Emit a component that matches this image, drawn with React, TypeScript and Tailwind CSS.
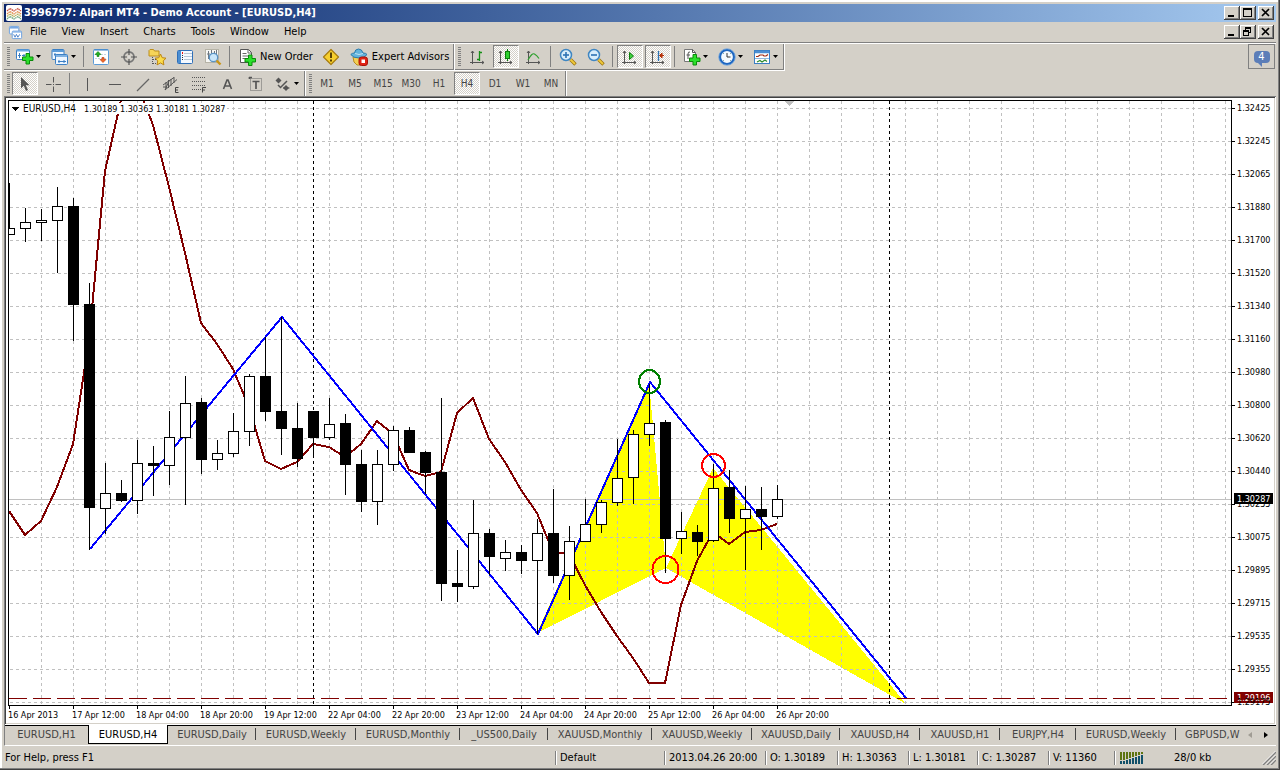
import type { ReactNode } from 'react';

const PRICES = [
  '1.32425', '1.32245', '1.32065', '1.31880', '1.31700', '1.31520', '1.31340', '1.31160', '1.30980', '1.30800',
  '1.30620', '1.30440', '1.30255', '1.30075', '1.29895', '1.29715', '1.29535', '1.29355', '1.29175',
];
const DATES = [
  '16 Apr 2013', '17 Apr 12:00', '18 Apr 04:00', '18 Apr 20:00', '19 Apr 12:00', '22 Apr 04:00', '22 Apr 20:00',
  '23 Apr 12:00', '24 Apr 04:00', '24 Apr 20:00', '25 Apr 12:00', '26 Apr 04:00', '26 Apr 20:00',
];

// One bar every 16 units: [high, low, body top, body bottom, falling]
const BARS: [number, number, number, number, number][] = [
  [183, 234, 228, 234, 0], [208, 241, 222, 228, 0], [209, 240, 220, 222, 0], [187, 272, 206, 220, 0],
  [198, 340, 206, 304, 1], [283, 549, 304, 507, 1], [463, 533, 493, 508, 0], [480, 501, 493, 500, 1],
  [440, 513, 463, 500, 0], [446, 495, 463, 465, 1], [411, 484, 437, 465, 0], [376, 504, 403, 437, 0],
  [398, 473, 402, 459, 1], [440, 469, 453, 459, 0], [413, 456, 431, 453, 0], [374, 445, 376, 431, 0],
  [337, 420, 376, 411, 1], [317, 454, 411, 428, 1], [403, 466, 428, 458, 1], [411, 456, 411, 437, 1],
  [398, 439, 424, 437, 0], [414, 494, 423, 464, 1], [450, 511, 464, 501, 1], [450, 524, 464, 501, 0],
  [426, 470, 430, 464, 0], [427, 452, 430, 452, 1], [451, 493, 452, 472, 1], [398, 600, 472, 583, 1],
  [550, 601, 583, 586, 1], [500, 588, 533, 586, 0], [529, 574, 533, 556, 1], [540, 570, 552, 558, 0],
  [545, 573, 552, 560, 1], [519, 633, 533, 560, 0], [489, 582, 533, 575, 1], [526, 599, 541, 575, 0],
  [499, 541, 524, 541, 0], [500, 532, 502, 524, 0], [439, 505, 478, 502, 0], [430, 503, 434, 477, 0],
  [384, 445, 423, 434, 0], [420, 572, 422, 538, 1], [512, 553, 531, 538, 0], [525, 555, 532, 541, 1],
  [464, 541, 488, 540, 0], [470, 532, 487, 518, 1], [486, 569, 509, 518, 0], [487, 549, 509, 516, 1],
  [485, 518, 499, 516, 0],
];
const INDICATOR = [
  511, 535, 521, 487, 444, 340, 171, 100, 84, 125, 187, 253, 323, 344, 369, 407, 461, 469, 462, 444, 447, 457, 444,
  421, 434, 470, 476, 472, 413, 398, 439, 462, 490, 513, 552, 554, 585, 612, 636, 658, 683, 683, 605, 561, 532, 544,
  532, 530, 524,
];
const barX = (i: number) => 9 + i * 16;

function Chart() {
  return (
    <svg viewBox="6 98 1268 625" className="block h-full w-full" shapeRendering="crispEdges" role="img" aria-label="EURUSD,H4">
      <defs>
        <clipPath id="plot">
          <rect x="9" y="101" width="1222" height="604" />
        </clipPath>
      </defs>
      <rect x="6" y="98" width="1268" height="625" fill="#fff" />
      <g clipPath="url(#plot)">
        <g fill="#ff0">
          <path d="M537 633L649 382L666 568Z" />
          <path d="M666 568L713 468L906 704Z" />
        </g>
        <g stroke="#c0c0c0" strokeDasharray="3 3">
          {PRICES.map((p, i) => (
            <line key={p} x1="10" x2="1231" y1={108.5 + i * 33} y2={108.5 + i * 33} />
          ))}
          {Array.from({ length: 38 }, (_, i) => (
            <line key={i} y1="101" y2="705" x1={41.5 + i * 32} x2={41.5 + i * 32} />
          ))}
        </g>
        <path d="M313.5 101V705M889.5 101V705" stroke="#000" strokeDasharray="3 3" />
        <path d="M9 499.5H1231" stroke="#c0c0c0" />
        <path d="M9 698.5H1231" stroke="#800000" strokeDasharray="18 6" />
        <polyline
          points={INDICATOR.map((y, i) => `${barX(i)},${y}`).join(' ')}
          fill="none"
          stroke="#800000"
          strokeWidth="2"
        />
        <polyline points="90,549 282,317 538,634 650,382 906,698" fill="none" stroke="#00f" strokeWidth="2" />
        {BARS.map(([high, low, top, bottom, falling], i) => (
          <g key={i} stroke="#000">
            <line x1={barX(i) + 0.5} x2={barX(i) + 0.5} y1={high} y2={low + 1} />
            <rect x={barX(i) - 4.5} y={top + 0.5} width="10" height={bottom - top} fill={falling ? '#000' : '#fff'} />
          </g>
        ))}
        <g fill="none" strokeWidth="2">
          <ellipse cx="649.5" cy="381.5" rx="10.5" ry="11.5" stroke="#008000" />
          <circle cx="713.5" cy="465.5" r="11.5" stroke="#f00" />
          <ellipse cx="665.5" cy="569.5" rx="13" ry="13.5" stroke="#f00" />
        </g>
        <path d="M785 101H794L789.5 106Z" fill="#c0c0c0" />
        <rect x="10" y="103" width="217" height="11" fill="#fff" />
      </g>
      <path d="M8.5 100.5H1231.5V705.5H8.5Z" fill="none" stroke="#000" />
      <path d="M12 107H19L15.5 111Z" />
      <g className="font-['DejaVu_Sans_Condensed','DejaVu_Sans',sans-serif] text-[9px]">
        <text x="23" y="112" className="text-[10px]">EURUSD,H4</text>
        {['1.30189', '1.30363', '1.30181', '1.30287'].map((v, i) => (
          <text key={v} x={84 + i * 36} y="112">{v}</text>
        ))}
        {PRICES.map((p, i) => (
          <g key={p}>
            <path d={`M1232 ${108.5 + i * 33}h3`} stroke="#000" />
            {i !== 18 && <text x="1237" y={111 + i * 33}>{p}</text>}
          </g>
        ))}
        {DATES.map((d, i) => (
          <g key={d}>
            <path d={`M${9.5 + i * 64} 706v3`} stroke="#000" />
            <text x={8 + i * 64} y="718">{d}</text>
          </g>
        ))}
        <rect x="1234" y="493" width="39" height="11" />
        <text x="1237" y="502" fill="#fff">1.30287</text>
        <rect x="1234" y="692" width="39" height="11" fill="#800000" />
        <text x="1237" y="701" fill="#fff">1.29196</text>
        <text x="1237" y="705">1.29175</text>
      </g>
    </svg>
  );
}

function Icon({ children }: { children: ReactNode }) {
  return (
    <svg viewBox="0 0 18 18" className="size-[18px] shrink-0" fill="none" aria-hidden="true">
      {children}
    </svg>
  );
}

const Plus = ({ x, y }: { x: number; y: number }) => (
  <path
    d={`M${x + 4} ${y + 0.5}h3.5v3.5h3.5v3.5h-3.5v3.5h-3.5v-3.5h-3.5v-3.5h3.5z`}
    fill="#2be02b"
    stroke="#0a8a0a"
    strokeLinejoin="round"
  />
);
const Axes = () => (
  <path d="M3.5 3v13M1 14.5h14M2 5l1.5-2L5 5M13 13l2 1.5-2 1.5" stroke="#555" />
);

const NewChartIcon = () => (
  <Icon>
    <rect x=".5" y="1.5" width="13" height="10" rx="1" fill="#fff" stroke="#3b7fc4" />
    <path d="M1 2.5h12" stroke="#6aa9e2" strokeWidth="2" />
    <path d="M3.5 5v5M2 7.5h3M8 6v3M6 7.5h3" stroke="#3b7fc4" />
    <Plus x={6} y={5} />
  </Icon>
);
const ProfilesIcon = () => (
  <Icon>
    <rect x="1" y="1.5" width="12" height="10" rx="1" fill="#eef6ff" stroke="#3b7fc4" />
    <path d="M1 3h12" stroke="#5b9bd8" strokeWidth="2" />
    <path d="M3 6.5h7M4 5v3" stroke="#3b7fc4" />
    <rect x="4.5" y="6.5" width="12" height="10" rx="1" fill="#eef6ff" stroke="#3b7fc4" />
    <path d="M5 8h11" stroke="#5b9bd8" strokeWidth="1.5" />
    <path d="M7 13.5h8M8 12v3M13 12v3" stroke="#3b7fc4" />
  </Icon>
);
const MarketWatchIcon = () => (
  <Icon>
    <rect x="1.5" y="1.5" width="15" height="15" rx="1" fill="#fff" stroke="#5b9bd8" />
    <path d="M2 2h14" stroke="#3b7fc4" />
    <path d="M3 6.5h12M3 10.5h12" stroke="#c6d4e4" strokeDasharray="2 1" />
    <path d="M6 3.5L9 6.500H7v2H5v-2H3z" fill="#22b022" stroke="#0a7a0a" strokeWidth=".6" />
    <path d="M11 14.500L14 11.500h-2v-2h-2v2H8z" fill="#f06a28" stroke="#b83208" strokeWidth=".6" />
  </Icon>
);
const TargetIcon = () => (
  <Icon>
    <circle cx="9" cy="9" r="5" stroke="#777" strokeWidth="1.8" />
    <path d="M9 1v6M9 11v6M1 9h6M11 9h6" stroke="#555" strokeWidth="1.2" />
    <circle cx="9" cy="9" r="1" fill="#ddd" />
  </Icon>
);
const FolderStarIcon = () => (
  <Icon>
    <path d="M1 8V2.5L2 1.5h3.5l1 1.5H11v5z" fill="#f6d458" stroke="#bc8e1c" />
    <path d="M4.5 9v7M5 11.5h3M5 15.5h3" stroke="#555" strokeDasharray="1 1" />
    <path d="M12.500 6l1.700 3.700 3.800.5-2.800 2.700.7 4-3.400-2-3.500 2 .8-4L7 10.200l3.800-.5z" fill="#fbdc4a" stroke="#bd8510" />
  </Icon>
);
const NavigatorIcon = () => (
  <Icon>
    <rect x="1.5" y="2.5" width="15" height="13" rx="1" fill="#f4f9ff" stroke="#2f6fb8" />
    <rect x="2" y="3" width="3" height="12" fill="#4b8ed2" />
    <path d="M8 5.5h8M8 8.5h8M8 11.5h8" stroke="#b5c6d6" />
    <path d="M6.5 4v2" stroke="#e11" />
    <path d="M6.5 7v6" stroke="#234" strokeDasharray="1 1" />
  </Icon>
);
const TesterIcon = () => (
  <Icon>
    <rect x="1.5" y="1.5" width="13" height="13" fill="#f7f7f4" stroke="#b6b3a6" />
    <path d="M4.5 3v8M7.5 2v4M10.5 3v5M12.5 2v5M3 6h3" stroke="#6d7680" />
    <circle cx="9.5" cy="9.5" r="4.2" fill="#c9e6fa" stroke="#5a93c4" strokeWidth="1.3" />
    <path d="M12.5 12.5l4 4" stroke="#c99518" strokeWidth="2.4" />
  </Icon>
);
const NewOrderIcon = () => (
  <Icon>
    <path d="M2.5 1.5h8l3 3v10h-11z" fill="#fff" stroke="#555" />
    <path d="M10 1.5V5h3.500M4.500 5.500h4M4.500 8h7M4.500 10.500h4" stroke="#666" />
    <Plus x={6.5} y={6.5} />
  </Icon>
);
const WarningIcon = () => (
  <Icon>
    <path d="M9 1.5L16.5 9 9 16.5 1.5 9z" fill="#f7cf2e" stroke="#a87c10" strokeWidth="1.2" strokeLinejoin="round" />
    <path d="M9 4.5v5.500M9 11.500v2" stroke="#5a4204" strokeWidth="2" />
  </Icon>
);
const ExpertIcon = () => (
  <Icon>
    <path d="M3 9h12l-1 5-4 3H7l-3-3z" fill="#f3cf54" stroke="#b88a20" />
    <path d="M4.5 5Q5 1 8.5 1T13 5q3 0 4 1.5-2 3.5-8 3.5T.8 6.5Q2 5 4.5 5z" fill="#63b3dc" stroke="#2c7bab" />
    <path d="M5 5.5q4 2 8 0" stroke="#bfe4f5" />
    <rect x="9" y="9" width="8.5" height="8.5" rx="2.5" fill="#e02214" stroke="#a81208" />
    <rect x="11.5" y="11.5" width="3.5" height="3.5" fill="#fff" />
  </Icon>
);
const BarsIcon = () => (
  <Icon>
    <Axes />
    <path d="M10.5 3v10M8 11.5h2.5M10.5 4.5H13" stroke="#159015" strokeWidth="1.3" />
  </Icon>
);
const CandleIcon = () => (
  <Icon>
    <Axes />
    <path d="M10.5 1v12" stroke="#0b7d0b" />
    <rect x="8.5" y="3.5" width="4" height="7" fill="#2fd02f" stroke="#0b7d0b" />
  </Icon>
);
const LineIcon = () => (
  <Icon>
    <Axes />
    <path d="M3 12Q7 4.5 9.5 6T14 10.5" stroke="#2fa02f" strokeWidth="1.2" />
  </Icon>
);
const ZoomIcon = ({ plus = false }) => (
  <Icon>
    <path d="M11.5 11.5l5 5" stroke="#9b7410" strokeWidth="3.4" />
    <path d="M11.5 11.5l4.5 4.5" stroke="#f0c93a" strokeWidth="1.8" />
    <circle cx="7" cy="7" r="5.5" fill="#d8eefb" stroke="#3f86c2" strokeWidth="1.5" />
    <path d="M4 7h6" stroke="#2c72b4" strokeWidth="1.6" />
    {plus && <path d="M7 4v6" stroke="#2c72b4" strokeWidth="1.6" />}
  </Icon>
);
const AutoScrollIcon = () => (
  <Icon>
    <Axes />
    <path d="M8.5 4.5v7l4-3.5z" fill="#3fd03f" stroke="#0b7d0b" />
  </Icon>
);
const ShiftIcon = () => (
  <Icon>
    <Axes />
    <path d="M9.5 3v10" stroke="#2c72b4" strokeWidth="1.3" />
    <path d="M15 7.5h-4M13 5l-2.5 2.5L13 10z" stroke="#b33008" fill="#d24a18" />
  </Icon>
);
const IndicatorIcon = () => (
  <Icon>
    <path d="M1.5 1.5h8l3 3v9h-11z" fill="#fff" stroke="#777" />
    <path d="M9.5 1.5v3h3M7 4Q5 3.5 5 6v5M3.5 7H7" stroke="#555" />
    <Plus x={6} y={6} />
  </Icon>
);
const ClockIcon = () => (
  <Icon>
    <circle cx="9" cy="9" r="7" fill="#f4faff" stroke="#1e66c0" strokeWidth="2.2" />
    <circle cx="9" cy="9" r="8.2" stroke="#5a9ae0" strokeWidth=".8" />
    <path d="M9 9V5M9 9h3.5" stroke="#333" />
    <path d="M5 5l1 1M13 5l-1 1M5 13l1-1M13 13l-1-1" stroke="#8aa" />
  </Icon>
);
const TemplateIcon = () => (
  <Icon>
    <rect x="1.5" y="2.5" width="15" height="13" fill="#fff" stroke="#3b7fc4" />
    <path d="M2 4h14" stroke="#4b8ed2" strokeWidth="2.5" />
    <path d="M3 8.5h2l2-1.5h3l1 1h2l2-1.5" stroke="#a02a10" strokeWidth="1.2" />
    <path d="M2 10.5h14" stroke="#8fb8de" />
    <path d="M4 14l3-1.5L9 14l3-2 2 1.5" stroke="#2e8b2e" strokeWidth="1.2" />
  </Icon>
);

const CursorIcon = () => (
  <Icon>
    <path d="M5 2v11.5l2.8-2.7L10 16l2-1-2.2-4.700h3.700z" fill="#555" />
  </Icon>
);
const CrosshairIcon = () => (
  <Icon>
    <path d="M9.5 2v5.5M9.5 11.5V17M2 9.5h5.500M11.500 9.500H17M9 9.500h1" stroke="#555" />
  </Icon>
);
const VLineIcon = () => (
  <Icon>
    <path d="M9.5 3v13" stroke="#555" />
  </Icon>
);
const HLineIcon = () => (
  <Icon>
    <path d="M3 9.5h12" stroke="#555" />
  </Icon>
);
const TrendIcon = () => (
  <Icon>
    <path d="M3 16L15 4" stroke="#666" strokeWidth="1.2" />
  </Icon>
);
const ChannelIcon = () => (
  <Icon>
    <path d="M1 10L12 2.5M3 15L15 4.5M4 7v6M6.5 5v8M9 4v7M12 2v6M3 15l4-9M1 12h4" stroke="#555" />
    <path d="M16.5 12.500h-3v5h3M13.500 15H16" stroke="#444" />
  </Icon>
);
const FiboIcon = () => (
  <Icon>
    <path d="M2 2.500h14M2 6.500h14M2 10.500h14M2 14.500h9" stroke="#555" strokeDasharray="1 1" />
    <path d="M16 12.500h-3.500v5M12.500 15H15" stroke="#444" />
  </Icon>
);
const TextIcon = () => (
  <Icon>
    <path d="M5.500 14L9 5h1l3.500 9M7 11h5" stroke="#555" strokeWidth="1.600" />
  </Icon>
);
const LabelIcon = () => (
  <Icon>
    <rect x="4.500" y="3.500" width="11" height="12" stroke="#666" strokeDasharray="1 1" />
    <path d="M6.500 6.500h7M10 6v8M3 2.500h3M3.500 2v2" stroke="#555" strokeWidth="1.700" />
  </Icon>
);
const ArrowsIcon = () => (
  <Icon>
    <path d="M4.500 2.500l3 3-3 3-3-3z" fill="#555" />
    <path d="M12 10l3 3-3 3-3-3z" fill="#555" />
    <path d="M4 10l2.500 2.500L13 6" stroke="#555" strokeWidth="1.500" />
    <path d="M9 13h6.500" stroke="#555" />
  </Icon>
);

const Caret = () => (
  <svg viewBox="0 0 5 3" className="h-[3px] w-[5px] shrink-0" aria-hidden="true">
    <path d="M0 0h5L2.5 3z" />
  </svg>
);
const Grip = () => (
  <div className="mr-px ml-[3px] h-[19px] w-[3px] shrink-0 self-center bg-[repeating-linear-gradient(#808080_0_1px,#d4d0c8_1px_2px)]" />
);
const Sep = () => <div className="mr-[3px] ml-[2px] h-[21px] w-px shrink-0 self-center bg-[#808080]" />;

function Tool({ label, children, pressed = false }: { label: string; children: ReactNode; pressed?: boolean }) {
  return (
    <button
      type="button"
      aria-label={label}
      aria-pressed={pressed}
      className={
        pressed
          ? 'mx-px flex h-[23px] w-[26px] shrink-0 items-center justify-center self-center border border-t-[#808080] border-r-white border-b-white border-l-[#808080] bg-[conic-gradient(#fff_25%,#d4d0c8_0_50%,#fff_0_75%,#d4d0c8_0)] bg-[length:2px_2px]'
          : 'flex h-full w-7 shrink-0 items-center justify-center'
      }
    >
      {children}
    </button>
  );
}
function MenuTool({ label, children }: { label: string; children: ReactNode }) {
  return (
    <button type="button" aria-label={label} className="flex h-full w-[35px] shrink-0 items-center gap-[2px] pl-[5px]">
      {children}
      <Caret />
    </button>
  );
}
function WideTool({ label, children }: { label: string; children: ReactNode }) {
  return (
    <button type="button" className="flex h-full shrink-0 items-center gap-1 pr-1 pl-[5px] whitespace-nowrap">
      {children}
      {label}
    </button>
  );
}
function Section({ children }: { children: ReactNode }) {
  return (
    <div className="flex h-[27px] shrink-0 items-stretch border-r border-b border-white">
      <div className="flex items-stretch border-r border-b border-[#808080]">
        <Grip />
        {children}
      </div>
    </div>
  );
}

function WindowButtons({ restore = false }) {
  const button =
    'flex h-[14px] w-4 items-center justify-center bg-[#d4d0c8] shadow-[inset_-1px_-1px_#404040,inset_1px_1px_#fff,inset_-2px_-2px_#808080]';
  return (
    <div className="mr-[2px] flex shrink-0">
      <button type="button" aria-label="Minimize" className={button}>
        <svg viewBox="0 0 16 14" className="h-[14px] w-4"><path d="M4 9h6v2H4z" /></svg>
      </button>
      <button type="button" aria-label={restore ? 'Restore' : 'Maximize'} className={button}>
        <svg viewBox="0 0 16 14" className="h-[14px] w-4" fill="none" stroke="#000" shapeRendering="crispEdges">
          {restore ? (
            <path d="M5.500 5V2.500h5v5H9M5 3.500h6M3.500 6.500h5v4h-5zM3 5.500h6" />
          ) : (
            <path d="M3.500 2.500h8v8h-8zM3 3.500h9" />
          )}
        </svg>
      </button>
      <button type="button" aria-label="Close" className={`${button} ml-[2px]`}>
        <svg viewBox="0 0 16 14" className="h-[14px] w-4" stroke="#000" strokeWidth="1.700">
          <path d="M4 3l7 7M11 3l-7 7" />
        </svg>
      </button>
    </div>
  );
}

const MENU = ['File', 'View', 'Insert', 'Charts', 'Tools', 'Window', 'Help'];
const FRAMES = ['M1', 'M5', 'M15', 'M30', 'H1', 'H4', 'D1', 'W1', 'MN'];
const TABS: [string, string][] = [
  ['EURUSD,H1', 'w-[83px]'], ['EURUSD,H4', 'w-[80px]'], ['EURUSD,Daily', 'w-[88px]'], ['EURUSD,Weekly', 'w-[100px]'],
  ['EURUSD,Monthly', 'w-[104px]'], ['_US500,Daily', 'w-[88px]'], ['XAUUSD,Monthly', 'w-[104px]'],
  ['XAUUSD,Weekly', 'w-[100px]'], ['XAUUSD,Daily', 'w-[88px]'], ['XAUUSD,H4', 'w-[80px]'], ['XAUUSD,H1', 'w-[80px]'],
  ['EURJPY,H4', 'w-[76px]'], ['EURUSD,Weekly', 'w-[100px]'],
];
const STATUS: [string, string][] = [
  ['Default', 'w-[109px]'], ['2013.04.26 20:00', 'w-[101px]'], ['O: 1.30189', 'w-[72px]'], ['H: 1.30363', 'w-[71px]'],
  ['L: 1.30181', 'w-[69px]'], ['C: 1.30287', 'w-[71px]'], ['V: 11360', 'w-[66px]'],
];

export default function App() {
  return (
    <div className="flex h-screen flex-col overflow-hidden bg-[#d4d0c8] p-1 pb-[3px] font-['DejaVu_Sans_Condensed','DejaVu_Sans',sans-serif] text-[11px] leading-[14px] text-black shadow-[inset_-1px_-1px_#404040,inset_-2px_-2px_#808080,inset_2px_2px_#fff]">
      <header className="flex h-[18px] shrink-0 items-center gap-[2px] bg-linear-to-r from-[#0a246a] to-[#a6caf0] pl-[2px] font-bold text-white">
        <svg viewBox="0 0 16 16" className="size-4 shrink-0" fill="none" aria-hidden="true">
          <rect width="16" height="16" rx="2" fill="#fff" />
          <path d="M1 6l3-2.500L8 6l4-2.500L15 6" stroke="#c85040" strokeWidth="1.300" strokeDasharray="1.500 .5" />
          <path d="M1 9l3-2.500L8 9l4-2.500L15 9" stroke="#e08a48" strokeWidth="1.300" strokeDasharray="1.500 .5" />
          <path d="M1 11.500L4 9l4 2.500L12 9l3 2.500" stroke="#b8b060" strokeWidth="1.300" strokeDasharray="1.500 .5" />
          <path d="M1 14l3-2.500L8 14l4-2.500L15 14" stroke="#70a880" strokeWidth="1.300" strokeDasharray="1.500 .5" />
        </svg>
        <h1 className="min-w-0 flex-1 truncate">3996797: Alpari MT4 - Demo Account - [EURUSD,H4]</h1>
        <WindowButtons />
      </header>

      <nav className="flex h-5 shrink-0 items-center pl-1">
        <svg viewBox="0 0 16 16" className="size-[15px] shrink-0" fill="none" aria-hidden="true">
          <rect x="1.500" y="1.500" width="10" height="8" rx="1" fill="#fff" stroke="#6aa0e0" />
          <path d="M2 3h9" stroke="#6aa0e0" strokeWidth="1.500" />
          <rect x="4.500" y="6.500" width="10" height="8" rx="1" fill="#fff" stroke="#6aa0e0" />
          <path d="M5 7.500h9" stroke="#6aa0e0" />
          <path d="M6 10l1.500 3L9 10l1.500 3 2-3" stroke="#4a80c8" />
        </svg>
        <ul className="flex flex-1 gap-px">
          {MENU.map((m) => (
            <li key={m}>
              <button type="button" className="px-[7px]">{m}</button>
            </li>
          ))}
        </ul>
        <WindowButtons restore />
      </nav>
      <div className="h-[2px] shrink-0 border-t border-b border-t-[#808080] border-b-white" />

      <div className="flex shrink-0">
        <div className="min-w-0 flex-1">
          <div className="flex">
            <Section>
              <MenuTool label="New chart"><NewChartIcon /></MenuTool>
              <MenuTool label="Profiles"><ProfilesIcon /></MenuTool>
              <Sep />
              <Tool label="Market Watch"><MarketWatchIcon /></Tool>
              <Tool label="Data Window"><TargetIcon /></Tool>
              <Tool label="Navigator"><FolderStarIcon /></Tool>
              <Tool label="Terminal"><NavigatorIcon /></Tool>
              <Tool label="Strategy Tester"><TesterIcon /></Tool>
              <Sep />
              <WideTool label="New Order"><NewOrderIcon /></WideTool>
              <Tool label="MetaEditor"><WarningIcon /></Tool>
              <WideTool label="Expert Advisors"><ExpertIcon /></WideTool>
            </Section>
            <Section>
              <div className="flex pl-[2px]">
                <Tool label="Bar Chart"><BarsIcon /></Tool>
                <Tool label="Candlesticks" pressed><CandleIcon /></Tool>
                <Tool label="Line Chart"><LineIcon /></Tool>
              </div>
              <Sep />
              <Tool label="Zoom In"><ZoomIcon plus /></Tool>
              <Tool label="Zoom Out"><ZoomIcon /></Tool>
              <Sep />
              <Tool label="Auto Scroll" pressed><AutoScrollIcon /></Tool>
              <Tool label="Chart Shift" pressed><ShiftIcon /></Tool>
              <Sep />
              <MenuTool label="Indicators"><IndicatorIcon /></MenuTool>
              <MenuTool label="Periods"><ClockIcon /></MenuTool>
              <MenuTool label="Templates"><TemplateIcon /></MenuTool>
            </Section>
          </div>
          <div className="flex h-[25px] items-stretch">
            <div className="flex items-stretch border-r border-[#808080]">
              <Grip />
              <Tool label="Cursor" pressed><CursorIcon /></Tool>
              <Tool label="Crosshair"><CrosshairIcon /></Tool>
              <Sep />
              <Tool label="Vertical Line"><VLineIcon /></Tool>
              <Tool label="Horizontal Line"><HLineIcon /></Tool>
              <Tool label="Trendline"><TrendIcon /></Tool>
              <Tool label="Equidistant Channel"><ChannelIcon /></Tool>
              <Tool label="Fibonacci Retracement"><FiboIcon /></Tool>
              <Tool label="Text"><TextIcon /></Tool>
              <Tool label="Text Label"><LabelIcon /></Tool>
              <MenuTool label="Arrows"><ArrowsIcon /></MenuTool>
            </div>
            <div className="flex items-stretch border-r border-l border-white">
              <div className="flex items-stretch border-r border-[#808080] text-[10px] text-[#444]">
                <Grip />
                {FRAMES.map((f) => (
                  <Tool key={f} label={f} pressed={f === 'H4'}>{f}</Tool>
                ))}
              </div>
            </div>
          </div>
        </div>
        <button
          type="button"
          aria-label="Messages"
          className="mr-px flex h-[25px] w-[27px] shrink-0 items-center justify-center border border-[#808080]"
        >
          <span className="relative flex h-3 w-4 items-center justify-center rounded-sm bg-[#5b7db8] text-[11px] leading-3 text-white">
            4
            <svg viewBox="0 0 5 4" className="absolute top-full left-1 h-1 w-[5px]" aria-hidden="true">
              <path d="M0 0h4v4z" fill="#5b7db8" />
            </svg>
          </span>
        </button>
      </div>

      <main className="min-h-0 flex-1 bg-white p-[2px] shadow-[inset_1px_1px_#808080,inset_-1px_-1px_#fff,inset_2px_2px_#404040,inset_-2px_-2px_#d4d0c8]">
        <Chart />
      </main>

      <div className="flex h-[21px] shrink-0 border-b border-l border-b-white border-l-[#808080] text-[#444]">
        <div role="tablist" className="flex min-w-0 flex-1 overflow-hidden">
          {TABS.map(([name, width], i) => (
            <button
              key={i}
              type="button"
              role="tab"
              aria-selected={i === 1}
              className={
                i === 1
                  ? `${width} h-[19px] shrink-0 border border-t-0 border-black bg-white pt-px whitespace-nowrap text-black`
                  : `${width} relative h-[20px] shrink-0 border-t border-black pb-[2px] whitespace-nowrap after:absolute after:top-[2px] after:right-0 after:h-3 after:w-px after:bg-[#444] first:after:hidden`
              }
            >
              {name}
            </button>
          ))}
          <button type="button" role="tab" aria-selected={false} className="h-[20px] min-w-0 flex-1 overflow-hidden border-t border-black pb-[2px] pl-[9px] text-left whitespace-nowrap">
            GBPUSD,W
          </button>
        </div>
        <div className="flex h-[20px] w-9 shrink-0 items-center justify-between border-t border-black px-2 pb-[2px]">
          <button type="button" aria-label="Previous tabs">
            <svg viewBox="0 0 4 6" className="h-[6px] w-1"><path d="M4 0v6L0 3z" fill="#a09c94" /></svg>
          </button>
          <button type="button" aria-label="Next tabs">
            <svg viewBox="0 0 4 6" className="h-[6px] w-1"><path d="M0 0v6l4-3z" /></svg>
          </button>
        </div>
      </div>

      <footer className="flex h-[21px] shrink-0 items-center pt-[2px] whitespace-nowrap">
        <div className="min-w-0 flex-1 truncate pl-px">For Help, press F1</div>
        {STATUS.map(([text, width]) => (
          <div key={text} className={`${width} shrink-0 border-l border-[#808080]`}>
            <div className="border-l border-white pl-[3px]">{text}</div>
          </div>
        ))}
        <div className="w-[162px] shrink-0 border-l border-[#808080]">
          <div className="flex items-center border-l border-white pl-[4px]">
            <svg viewBox="0 0 24 12" className="h-3 w-6" shapeRendering="crispEdges" aria-hidden="true">
              {[9, 9, 8, 7, 6, 5, 4, 3].map((h, i) => (
                <g key={i}>
                  <rect x={i * 3} y="0" width="2" height={h - 1} fill="#5e7410" />
                  <rect x={i * 3} y={h} width="2" height={12 - h} fill="#10506a" />
                </g>
              ))}
            </svg>
            <span className="ml-[30px] flex-1">28/0 kb</span>
            <svg viewBox="0 0 14 14" className="size-[14px]" aria-hidden="true">
              <path d="M1 14L14 1M5 14l9-9M9 14l5-5" stroke="#808080" strokeWidth="1.500" />
              <path d="M0 13.500L13.500 0M4 13.500l9.500-9.500M8 13.500L13.500 8" stroke="#fff" strokeWidth=".8" />
            </svg>
          </div>
        </div>
      </footer>
    </div>
  );
}
